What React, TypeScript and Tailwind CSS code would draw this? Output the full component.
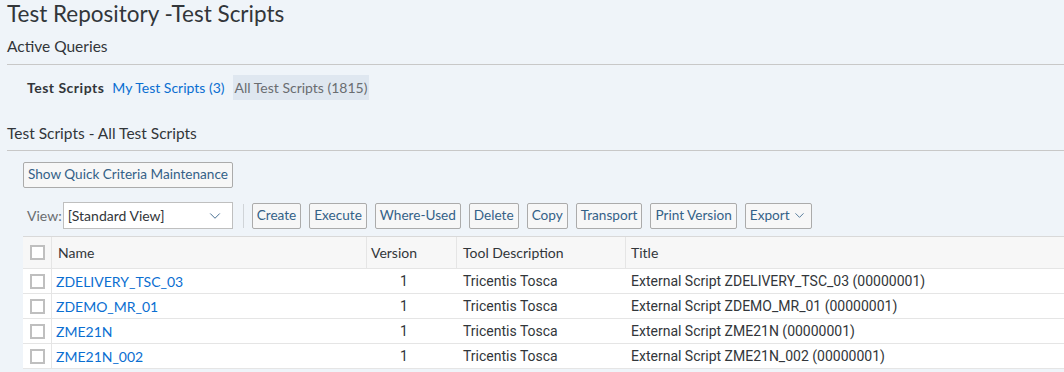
import { ChevronDown } from 'lucide-react';

const rows = [
  { name: 'ZDELIVERY_TSC_03', version: '1', tool: 'Tricentis Tosca', title: 'External Script ZDELIVERY_TSC_03 (00000001)' },
  { name: 'ZDEMO_MR_01', version: '1', tool: 'Tricentis Tosca', title: 'External Script ZDEMO_MR_01 (00000001)' },
  { name: 'ZME21N', version: '1', tool: 'Tricentis Tosca', title: 'External Script ZME21N (00000001)' },
  { name: 'ZME21N_002', version: '1', tool: 'Tricentis Tosca', title: 'External Script ZME21N_002 (00000001)' },
];

const toolbarButtons = ['Create', 'Execute', 'Where-Used', 'Delete', 'Copy', 'Transport', 'Print Version'];

function Btn({ children }: { children: React.ReactNode }) {
  return (
    <button className="h-[26px] px-[4px] border border-[#ababab] rounded-[2px] bg-[#f7f7f7] text-[13.6px] text-[#346187] leading-none flex items-center">
      {children}
    </button>
  );
}

function Checkbox() {
  return <div className="w-[15px] h-[15px] border-2 border-[#bfbfbf] bg-white" />;
}

export default function App() {
  return (
    <div className="w-[1064px] h-[372px] overflow-hidden bg-[#eff4f9] text-[#32363a] font-['Lato','Open_Sans',sans-serif]">
      {/* Header */}
      <div className="pl-[7px]">
        <h1 className="text-[22.5px] leading-[28px]">Test Repository -Test Scripts</h1>
        <h2 className="text-[15.5px] leading-[20px] mt-[8px] pb-[8px] border-b border-[#c8c8c8]">Active Queries</h2>
      </div>

      {/* Query row */}
      <div className="flex items-center h-[25px] mt-[10px] pl-[27px] text-[14px]">
        <span className="font-bold tracking-[0.5px] mr-[8px]">Test Scripts</span>
        <span className="text-[#0a6ed1] mr-[8px]">My Test Scripts (3)</span>
        <span className="h-[25px] px-[2px] flex items-center bg-[#dfe7f0] text-[#6a6d70]">All Test Scripts (1815)</span>
      </div>

      {/* Section title */}
      <div className="pl-[7px] mt-[23px]">
        <h2 className="text-[15.5px] leading-[20px] pb-[7px] border-b border-[#c8c8c8]">Test Scripts - All Test Scripts</h2>
      </div>

      <div className="pl-[23px] mt-[11px]">
        <Btn>Show Quick Criteria Maintenance</Btn>

        {/* Toolbar */}
        <div className="flex items-center mt-[14px] gap-[8px]">
          <span className="text-[14px] text-[#6a6d70] pl-[4px] mr-[-7px]">View:</span>
          <div className="w-[170px] h-[27px] bg-white border border-[#bfbfbf] flex items-center justify-between pl-[4px] pr-[8px] text-[14px] text-[#32363a]">
            <span>[Standard View]</span>
            <ChevronDown size={18} strokeWidth={1.2} className="text-[#346187]" />
          </div>
          <div className="w-px h-[24px] ml-[2px] bg-[#d0d4d8]" />
          {toolbarButtons.map((b) => (
            <Btn key={b}>{b}</Btn>
          ))}
          <Btn>
            Export
            <ChevronDown size={15} strokeWidth={1.3} className="ml-[2px]" />
          </Btn>
        </div>

        {/* Table */}
        <div className="mt-[7px] bg-white w-[1100px] border-t border-[#d9d9d9] text-[14px]">
          <div className="flex h-[32px] bg-[#f7f7f7] border-b border-[#e5e5e5] text-[#32363a]">
            <div className="w-[29px] flex items-center justify-center border-r border-[#e5e5e5]">
              <Checkbox />
            </div>
            <div className="w-[315px] flex items-center pl-[6px] border-r border-[#e5e5e5]">Name</div>
            <div className="w-[90px] flex items-center pl-[4px] border-r border-[#e5e5e5]">Version</div>
            <div className="w-[169px] flex items-center pl-[6px] border-r border-[#e5e5e5]">Tool Description</div>
            <div className="flex-1 flex items-center pl-[5px]">Title</div>
          </div>
          {rows.map((r) => (
            <div key={r.name} className="flex h-[25px] border-b border-[#e5e5e5]">
              <div className="w-[29px] flex items-center justify-center border-r border-[#e5e5e5]">
                <Checkbox />
              </div>
              <div className="w-[315px] flex items-center pl-[4px] text-[#0a6ed1]">{r.name}</div>
              <div className="w-[90px] flex items-center justify-center pr-[16px] font-['Roboto',sans-serif]">{r.version}</div>
              <div className="w-[169px] flex items-center pl-[6px] font-['Roboto',sans-serif]">{r.tool}</div>
              <div className="flex-1 flex items-center pl-[5px] font-['Roboto',sans-serif]">{r.title}</div>
            </div>
          ))}
        </div>
      </div>
    </div>
  );
}
